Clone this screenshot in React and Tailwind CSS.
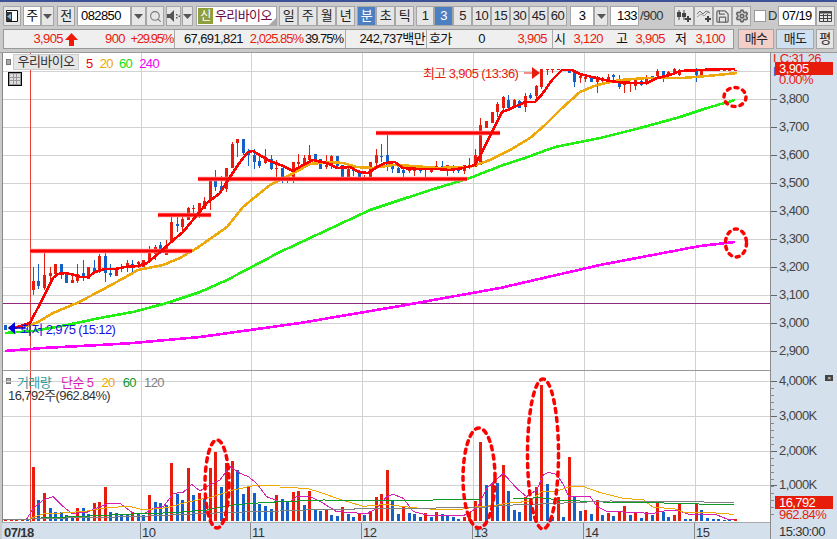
import { Search, Save, Settings } from 'lucide-react'

const RED = '#e61c0c'
const BLUE = '#155fc8'

// bar position for a given index, 133 bars on the chart
const barX = (i) => Math.round(5.33 + i * 5.525)

// candles: [wick top, body top, body bottom, wick bottom, 1 = up]
const candles = [
  [325, 325, 330, 330, 0], [326, 326, 328, 328, 1], [326, 326, 328, 329, 1], [325, 325, 328, 329, 1], [323, 323, 327, 329, 1],
  [267, 281, 290, 295, 1], [264, 281, 286, 289, 0], [252, 275, 288, 290, 1], [267, 273, 276, 281, 1], [264, 264, 274, 274, 1],
  [264, 264, 275, 279, 0], [273, 273, 283, 283, 0], [273, 280, 283, 283, 1], [264, 274, 281, 283, 1], [260, 273, 278, 281, 0],
  [267, 267, 279, 279, 1], [260, 268, 271, 274, 0], [254, 256, 270, 273, 1], [253, 256, 273, 282, 0], [264, 273, 275, 277, 0],
  [267, 268, 276, 276, 1], [264, 267, 269, 272, 1], [260, 263, 267, 272, 1], [260, 264, 268, 273, 0], [261, 262, 264, 268, 1],
  [260, 260, 267, 267, 1], [246, 252, 262, 262, 1], [245, 247, 254, 260, 1], [242, 245, 250, 254, 0], [240, 245, 255, 255, 1],
  [216, 222, 243, 243, 1], [217, 224, 226, 232, 0], [217, 219, 227, 232, 1], [207, 208, 220, 220, 1], [205, 208, 209, 219, 1],
  [203, 203, 211, 218, 1], [197, 201, 209, 209, 1], [180, 180, 201, 210, 1], [170, 180, 187, 191, 0], [176, 186, 191, 193, 0],
  [168, 168, 189, 192, 1], [142, 144, 168, 168, 1], [139, 139, 143, 157, 1], [139, 139, 153, 155, 0], [149, 153, 155, 166, 0],
  [149, 155, 162, 169, 0], [155, 161, 166, 168, 0], [149, 157, 163, 164, 1], [155, 159, 169, 170, 0], [160, 168, 169, 178, 1],
  [168, 168, 177, 183, 0], [175, 176, 177, 183, 0], [162, 162, 178, 183, 1], [154, 162, 164, 167, 1], [155, 158, 164, 168, 1],
  [145, 155, 160, 160, 1], [154, 154, 162, 162, 0], [159, 159, 169, 169, 0], [155, 165, 167, 169, 1], [155, 156, 165, 169, 1],
  [156, 156, 166, 167, 0], [165, 165, 177, 179, 0], [167, 169, 177, 179, 1], [166, 169, 171, 176, 0], [170, 171, 177, 181, 0],
  [175, 177, 179, 179, 1], [162, 162, 179, 179, 1], [149, 155, 163, 167, 1], [144, 156, 157, 162, 0], [135, 155, 165, 171, 0],
  [165, 165, 169, 173, 0], [166, 168, 173, 173, 0], [168, 170, 173, 177, 0], [167, 169, 171, 173, 1], [165, 167, 171, 176, 1],
  [166, 168, 171, 173, 0], [168, 169, 170, 177, 0], [166, 168, 172, 173, 1], [161, 166, 169, 170, 1], [161, 166, 169, 170, 0],
  [165, 165, 170, 176, 1], [165, 166, 169, 173, 0], [168, 169, 171, 173, 0], [165, 165, 171, 174, 1], [158, 165, 168, 169, 0],
  [149, 155, 167, 167, 1], [118, 125, 165, 165, 1], [121, 121, 128, 128, 1], [112, 112, 123, 123, 1], [102, 104, 112, 117, 1],
  [96, 97, 108, 110, 1], [95, 100, 108, 110, 0], [99, 100, 106, 108, 1], [100, 101, 108, 108, 0], [93, 96, 107, 112, 1],
  [93, 95, 98, 99, 0], [85, 86, 96, 100, 1], [69, 69, 87, 89, 1], [69, 69, 70, 75, 1], [69, 69, 70, 73, 1],
  [69, 69, 70, 70, 1], [69, 69, 70, 70, 1], [69, 69, 73, 73, 0], [70, 71, 82, 87, 0], [74, 76, 78, 83, 1],
  [74, 77, 79, 82, 1], [77, 77, 82, 82, 0], [76, 78, 82, 93, 1], [77, 79, 81, 82, 1], [74, 77, 80, 80, 1],
  [74, 75, 77, 80, 0], [75, 79, 87, 89, 0], [83, 84, 85, 93, 1], [82, 83, 84, 92, 1], [80, 80, 86, 90, 1],
  [80, 81, 85, 86, 0], [75, 77, 83, 85, 1], [76, 76, 79, 80, 0], [69, 71, 76, 77, 1], [71, 71, 77, 82, 0],
  [71, 72, 76, 76, 1], [68, 69, 74, 74, 1], [69, 70, 75, 76, 1], [70, 70, 71, 71, 1], [70, 70, 71, 71, 1],
  [68, 69, 75, 82, 0], [69, 69, 75, 78, 1], [70, 70, 71, 71, 1], [70, 70, 71, 71, 1], [70, 70, 71, 71, 1],
  [70, 70, 71, 71, 1], [70, 70, 71, 71, 1], [70, 70, 71, 71, 1],
]

// volume bars: [top y, 1 = up]
const vol = [
  [520, 1], [520, 1], [520, 1], [519, 1], [519, 0],
  ...[[306, 1], [405, 0], [384, 1], [429, 0], [441, 0], [441, 0], [450, 0], [453, 0], [429, 1], [429, 0], [447, 0], [414, 1], [411, 1], [366, 1], [441, 0], [444, 0], [447, 0], [450, 0], [441, 1], [447, 0], [450, 0], [390, 1], [411, 0], [414, 0], [420, 0], [294, 1], [387, 0], [405, 0], [309, 1], [390, 0], [384, 1], [399, 0], [309, 1], [261, 1], [366, 0], [294, 1], [288, 1], [315, 0], [387, 0], [366, 1], [384, 0], [417, 0], [423, 0], [432, 0], [390, 1],
    [402, 0], [411, 0], [381, 1], [378, 1], [420, 0], [378, 1], [432, 0], [438, 0], [432, 1], [450, 0], [453, 0], [426, 1], [447, 0], [456, 0], [447, 1], [450, 0], [438, 1], [396, 1], [387, 1], [315, 1], [408, 0], [447, 0], [426, 1], [444, 0], [447, 0], [456, 0], [444, 1], [456, 0], [441, 1], [447, 0], [450, 0], [456, 0], [462, 0], [456, 1], [441, 1], [408, 1], [231, 1], [360, 0], [354, 1], [354, 0], [300, 1], [378, 0], [435, 0], [441, 0], [396, 1], [411, 0], [366, 1], [60, 1], [357, 0], [456, 0], [396, 1],
    [456, 0], [276, 1], [396, 0], [438, 0], [435, 1], [447, 0], [405, 1], [450, 0], [444, 1], [453, 0], [438, 1], [423, 1], [450, 0], [441, 1], [459, 0], [441, 1], [450, 0], [411, 1], [441, 0], [456, 0], [450, 1], [414, 1], [462, 0], [462, 0], [414, 1], [435, 0], [459, 0], [462, 0], [462, 0], [465, 0], [462, 0], [462, 1]].map(([y, c]) => [365 + y / 3, c]),
]

const ma5 = [[14, 328], [30, 323], [42, 300], [47, 290], [53, 278], [58, 274], [65, 273], [75, 275], [80, 277], [88, 277], [95, 272], [105, 269], [115, 269], [125, 267], [138, 266], [147, 263], [158, 254], [170, 243], [183, 232], [197, 215], [207, 203], [220, 193], [230, 177], [240, 162], [248, 152], [253, 151], [263, 157], [270, 161], [283, 166], [293, 171], [303, 165], [313, 160], [327, 163], [337, 168], [350, 167], [359, 172], [368, 173], [377, 167], [385, 163], [395, 162], [403, 168], [417, 169], [437, 169], [450, 170], [463, 168], [475, 165], [483, 150], [493, 130], [502, 112], [510, 109], [525, 102], [535, 102], [543, 93], [552, 80], [562, 70], [572, 70], [580, 74], [592, 77], [605, 80], [617, 82], [633, 83], [647, 83], [657, 78], [670, 75], [680, 71], [700, 70], [725, 69], [735, 69]]
const ma20 = [[8, 328], [30, 325], [38, 322], [53, 313], [77, 303], [102, 290], [122, 279], [138, 270], [163, 265], [180, 258], [197, 248], [227, 227], [243, 207], [260, 193], [270, 185], [290, 175], [310, 164], [330, 162], [343, 163], [357, 167], [373, 168], [393, 165], [413, 166], [437, 168], [470, 167], [490, 160], [510, 150], [530, 138], [545, 125], [560, 110], [580, 92], [597, 85], [620, 80], [647, 78], [683, 78], [707, 76], [737, 73]]
const ma60 = [[5, 333], [33, 331], [67, 325], [100, 318], [133, 312], [167, 303], [200, 292], [227, 280], [280, 252], [325, 231], [370, 210], [403, 199], [437, 188], [470, 178], [503, 165], [525, 158], [555, 147], [600, 138], [640, 128], [680, 117], [707, 108], [735, 100]]
const ma240 = [[5, 351], [43, 348], [100, 345], [133, 343], [200, 337], [300, 323], [400, 306], [500, 288], [600, 265], [700, 246], [735, 242]]

const pts = (list) => list.map(([x, y]) => `${x},${y}`).join(' ')
// volume averages were read off crops, x starts at each crop's left edge
const crop = (ox, list) => pts(list.map(([x, y]) => [ox + x / 3, 365 + y / 3]))

const volLines = [
  { color: '#d81fb4', parts: [
    crop(0, [[80, 462], [100, 430], [130, 405], [160, 395], [190, 425], [215, 445], [260, 442], [300, 425], [330, 414], [360, 415], [400, 445], [430, 447], [460, 430], [490, 425], [520, 385], [550, 382], [575, 358], [600, 378], [625, 362], [660, 345], [690, 305], [720, 325], [745, 335], [770, 355], [800, 395], [840, 410]]),
    crop(280, [[0, 410], [30, 410], [50, 395], [90, 395], [130, 415], [170, 440], [210, 442], [260, 447], [290, 430], [320, 395], [340, 388], [370, 400], [400, 440], [440, 450], [490, 452], [550, 452], [590, 430], [620, 370], [670, 325], [710, 370], [740, 395], [770, 375], [790, 330], [805, 322], [835, 330]]),
    crop(557, [[0, 330], [20, 360], [35, 395], [100, 395], [120, 425], [150, 440], [250, 442], [280, 447], [320, 438], [360, 435], [400, 450], [430, 447], [480, 450], [510, 462], [530, 465]]),
  ] },
  { color: '#f0a800', parts: [
    crop(0, [[90, 460], [130, 447], [200, 443], [260, 438], [320, 428], [390, 424], [430, 435], [500, 428], [560, 412], [640, 395], [700, 375], [770, 360], [840, 362]]),
    crop(280, [[0, 367], [80, 370], [130, 385], [170, 400], [250, 424], [320, 418], [370, 425], [410, 428]]),
    crop(280, [[450, 433], [530, 435], [590, 425], [640, 422], [700, 412], [750, 410], [785, 380], [835, 378]]),
    crop(557, [[0, 378], [40, 365], [80, 365], [130, 383], [200, 400], [260, 405], [290, 428], [350, 430], [380, 442], [450, 442], [530, 448]]),
  ] },
  { color: '#0f9a2a', parts: [
    crop(0, [[100, 460], [270, 453], [400, 447], [520, 443], [620, 435], [700, 420], [760, 415], [840, 410]]),
    crop(280, [[0, 410], [130, 405], [250, 406], [460, 405], [600, 402], [700, 402], [780, 398], [835, 405]]),
    crop(557, [[0, 405], [160, 412], [200, 412], [320, 414], [530, 420]]),
  ] },
  { color: '#808080', parts: [
    crop(0, [[10, 465], [150, 460], [400, 455], [620, 445], [760, 440], [840, 438]]),
    crop(280, [[0, 438], [100, 434], [350, 430], [590, 428], [700, 420], [835, 415]]),
    crop(557, [[0, 415], [160, 408], [530, 412]]),
  ] },
]

const vGrid = [141, 251, 362, 473, 584, 695]
const priceGrid = [71, 99, 127, 155, 183, 211, 239, 267, 295, 323, 351]
const volGrid = [381, 416, 451, 485]

const priceLabels = [
  ['3,800', 99], ['3,700', 127], ['3,600', 155], ['3,500', 183], ['3,400', 211],
  ['3,300', 239], ['3,200', 267], ['3,100', 295], ['3,000', 323], ['2,900', 351],
]
const volLabels = [['4,000K', 381], ['3,000K', 416], ['2,000K', 451], ['1,000K', 485]]
const volTicks = Array.from({ length: 20 }, (_, i) => 381 + i * 7)

const Btn = ({ children, active, className = '' }) => (
  <div className={`flex h-full items-center justify-center border border-[#a6a6a6] ${active ? 'bg-[#4c80c2] text-white' : 'bg-[#e6e6e6] text-[#222]'} ${className}`}>
    {children}
  </div>
)

const Arrow = () => (
  <svg width="9" height="5" viewBox="0 0 9 5"><path d="M0 0h9L4.5 5z" fill="#555" /></svg>
)

function Toolbar() {
  return (
    <div className="mt-[4px] flex h-[20px] pl-[3px] text-[13px]">
      <Btn className="w-[18px]">
        <svg width="14" height="14" viewBox="0 0 14 14">
          <path d="M1.5 1.5h11v11h-11z" fill="#fff" stroke="#111" />
          <path d="M1 3h6v9H1z" fill="#333" />
          <path d="M2 7.5l4-3v6z" fill="#8cb4d8" />
        </svg>
      </Btn>
      <div className="ml-[2px] flex w-[31px] bg-white">
        <div className="flex flex-1 items-center justify-center border border-[#a6a6a6]">주</div>
        <Btn className="w-[13px]"><Arrow /></Btn>
      </div>
      <Btn className="ml-[3px] w-[18px]">전</Btn>
      <div className="ml-[2px] flex h-full w-[54px] items-center border border-[#a6a6a6] bg-white pl-[3px]">082850</div>
      <Btn className="w-[15px]"><Arrow /></Btn>
      <Btn className="w-[18px]"><Search size={13} strokeWidth={2} color="#777" /></Btn>
      <Btn className="ml-[2px] w-[15px]">
        <svg width="13" height="12" viewBox="0 0 13 12">
          <path d="M0 4h3l4-4v12l-4-4H0z" fill="#555" />
          <path d="M9 4h1.500v1.500H9zM9 7h1.500v1.500H9zM11.500 5.500H13V7h-1.500z" fill="#555" />
        </svg>
      </Btn>
      <Btn className="ml-[1px] w-[11px]"><Arrow /></Btn>
      <div className="relative ml-[3px] flex w-[81px] items-center border border-[#a6a6a6] bg-white pl-[1px]">
        <div className="flex h-[16px] w-[15px] items-center justify-center bg-[#8f9f3c] text-[12px] text-white">신</div>
        <div className="ml-[2px] text-[#6b0a44]">우리바이오</div>
        <svg className="absolute bottom-0 right-0" width="7" height="7" viewBox="0 0 7 7"><path d="M7 0v7H0z" fill="#aaa" /></svg>
      </div>
      <div className="ml-[2px] flex">
        {['일', '주', '월', '년'].map((t) => <Btn key={t} className="w-[19px]">{t}</Btn>)}
      </div>
      <div className="ml-[2px] flex">
        <Btn active className="w-[19px]">분</Btn>
        <Btn className="w-[19px]">초</Btn>
        <Btn className="w-[19px]">틱</Btn>
      </div>
      <div className="ml-[2px] flex">
        <Btn className="w-[18px]">1</Btn>
        <Btn active className="w-[19px]">3</Btn>
        {['5', '10', '15', '30', '45', '60'].map((t) => <Btn key={t} className="w-[19px]">{t}</Btn>)}
      </div>
      <div className="ml-[3px] flex w-[38px]">
        <div className="flex flex-1 items-center justify-center border border-[#a6a6a6] bg-white">3</div>
        <Btn className="w-[14px]"><Arrow /></Btn>
      </div>
      <div className="ml-[2px] flex w-[29px] items-center justify-end border border-[#a6a6a6] bg-white pr-[1px]">133</div>
      <div className="flex w-[35px] items-center pl-[1px] text-[#333]">/900</div>
      <Btn className="w-[20px]">
        <svg width="16" height="14" viewBox="0 0 16 14">
          <path d="M3 1v10M8 1v10" stroke="#444" />
          <path d="M1 3h4v5H1zM6 4h4v4H6z" fill="#444" />
          <path d="M12 7v6M9 10h6" stroke="#444" strokeWidth="2" />
        </svg>
      </Btn>
      <Btn className="w-[19px]">
        <svg width="16" height="14" viewBox="0 0 16 14" fill="none">
          <path d="M1 5l3-3 3 3 3-3 4 2" stroke="#777" />
          <path d="M1 8l4-3 3 2 5-5" stroke="#999" />
          <path d="M12 7v6M9 10h6" stroke="#444" strokeWidth="2" />
        </svg>
      </Btn>
      <Btn className="w-[19px]"><Save size={15} strokeWidth={2} color="#666" /></Btn>
      <Btn className="w-[19px]"><Settings size={14} strokeWidth={3} color="#666" /></Btn>
      <div className="ml-[3px] mt-[4px] h-[12px] w-[12px] border border-[#999] bg-white" />
      <div className="flex w-[12px] items-center pl-[2px] text-[#333]">D</div>
      <div className="flex w-[38px] items-center justify-center border border-[#a6a6a6] bg-white">07/19</div>
      <Btn className="w-[19px]">
        <svg width="13" height="12" viewBox="0 0 13 12" fill="none" stroke="#444">
          <path d="M.5 1.500h12v10H.5z" />
          <path d="M.5 2.500h12" strokeWidth="2" />
          <path d="M.5 5.500h12M.5 8.500h12M4.500 4v8M8.500 4v8" />
        </svg>
      </Btn>
    </div>
  )
}

function InfoBar() {
  const r = 'text-right text-[#e8200f]'
  return (
    <div className="mt-[3px] flex h-[20px] pl-[3px] text-[13px]">
      <div className="flex h-full w-[731px] items-center border border-[#999] bg-[#efefef] text-[#111]">
        <div className="flex h-full w-[171px] items-center border-r border-[#aaa]">
          <span className={`${r} w-[59px]`}>3,905</span>
          <svg className="ml-[2px]" width="13" height="13" viewBox="0 0 13 13"><path d="M6.500 0L13 7H9v6H4V7H0z" fill="#f01a08" /></svg>
          <span className={`${r} w-[47px]`}>900</span>
          <span className={`${r} w-[48px] tracking-[-1.300px]`}>+29.95%</span>
        </div>
        <div className="flex h-full w-[171px] items-center border-r border-[#aaa]">
          <span className="w-[68px] text-right">67,691,821</span>
          <span className={`${r} w-[60px] tracking-[-1px]`}>2,025.85%</span>
          <span className="w-[40px] text-right tracking-[-1px]">39.75%</span>
        </div>
        <div className="flex h-full w-[81px] items-center border-r border-[#aaa]">
          <span className="w-[79px] text-right">242,737백만</span>
        </div>
        <div className="flex h-full w-[126px] items-center border-r border-[#aaa]">
          <span className="ml-[2px] w-[26px]">호가</span>
          <span className="w-[30px] text-right">0</span>
          <span className={`${r} w-[62px]`}>3,905</span>
        </div>
        <div className="flex h-full flex-1 items-center">
          <span className="w-[14px] pl-[1px]">시</span>
          <span className={`${r} w-[36px]`}>3,120</span>
          <span className="ml-[13px] w-[14px]">고</span>
          <span className={`${r} w-[35px]`}>3,905</span>
          <span className="ml-[10px] w-[15px]">저</span>
          <span className={`${r} w-[35px]`}>3,100</span>
        </div>
      </div>
      <Btn className="ml-[4px] w-[36px] !bg-[#f3cfc8]">매수</Btn>
      <Btn className="ml-[2px] w-[38px] !bg-[#cfe0f3]">매도</Btn>
      <Btn className="ml-[2px] w-[18px]">평</Btn>
    </div>
  )
}

function PriceChart() {
  return (
    <svg className="absolute inset-0 h-full w-full" viewBox="3 53 767 317">
      <g shapeRendering="crispEdges" stroke="#d2d2d2">
        {priceGrid.map((y) => <line key={y} x1="3" x2="770" y1={y + 0.5} y2={y + 0.5} />)}
        {vGrid.map((x) => <line key={x} x1={x + 0.5} x2={x + 0.5} y1="53" y2="370" />)}
      </g>
      <line x1="30.500" x2="30.500" y1="53" y2="370" stroke="#e8413a" shapeRendering="crispEdges" />
      <line x1="3" x2="770" y1="303.500" y2="303.500" stroke="#8d2a80" shapeRendering="crispEdges" />
      <g shapeRendering="crispEdges">
        {candles.map(([wt, bt, bb, wb, up], i) => {
          const x = barX(i)
          const c = up ? RED : BLUE
          return (
            <g key={i}>
              <line x1={x + 0.5} x2={x + 0.5} y1={wt} y2={wb} stroke={c} />
              <rect x={x - 1} y={bt} width="3" height={Math.max(bb - bt, 1)} fill={c} />
            </g>
          )
        })}
      </g>
      <g fill="none" strokeLinejoin="round">
        <g shapeRendering="crispEdges">
          <polyline points={pts(ma240)} stroke="#ff00ff" strokeWidth="2.600" />
          <polyline points={pts(ma60)} stroke="#22f012" strokeWidth="2.600" />
          <polyline points={pts(ma20)} stroke="#efa80a" strokeWidth="2.600" />
        </g>
        {[[30, 192, 251], [158, 211, 215], [198, 467, 179], [376, 500, 133]].map(([x1, x2, y]) => (
          <g key={y}>
            <line x1={x1} x2={x2} y1={y} y2={y} stroke="#ff8a8a" strokeWidth="4.500" />
            <line x1={x1} x2={x2} y1={y} y2={y} stroke="#ff0000" strokeWidth="3" />
          </g>
        ))}
        <polyline points={pts(ma5)} stroke="#ff0000" strokeWidth="2.600" shapeRendering="crispEdges" />
        <path d="M524 73h8" stroke={RED} />
        <path d="M532 67l8 6-8 6z" fill={RED} />
        <path d="M13 328h12" stroke="#0000e0" strokeWidth="1.500" />
        <path d="M15 322l-7 6 7 6z" fill="#0000e0" />
        <ellipse cx="735" cy="97" rx="11" ry="9.500" stroke="#f00" strokeWidth="3.500" strokeLinecap="round" strokeDasharray="3 5" />
        <ellipse cx="736" cy="243" rx="10.500" ry="14" stroke="#f00" strokeWidth="3.500" strokeLinecap="round" strokeDasharray="3 5" />
      </g>
    </svg>
  )
}

function VolumeChart() {
  return (
    <svg className="absolute inset-0 z-10 h-full w-full overflow-visible" viewBox="3 371 767 151">
      <g shapeRendering="crispEdges" stroke="#d2d2d2">
        {volGrid.map((y) => <line key={y} x1="3" x2="770" y1={y + 0.5} y2={y + 0.5} />)}
        {vGrid.map((x) => <line key={x} x1={x + 0.5} x2={x + 0.5} y1="371" y2="522" />)}
      </g>
      <line x1="30.500" x2="30.500" y1="371" y2="522" stroke="#e8413a" shapeRendering="crispEdges" />
      <g shapeRendering="crispEdges">
        {vol.map(([y, up], i) => (
          <rect key={i} x={barX(i) - 1} y={Math.round(y)} width="3" height={521 - Math.round(y)} fill={up ? RED : BLUE} />
        ))}
      </g>
      <g fill="none">
        <g shapeRendering="crispEdges">
          {volLines.map((l) => l.parts.map((p, i) => <polyline key={l.color + i} points={p} stroke={l.color} />))}
        </g>
        <ellipse cx="217" cy="484" rx="12" ry="44" stroke="#f00" strokeWidth="3.500" strokeLinecap="round" strokeDasharray="4 5" />
        <ellipse cx="479" cy="478" rx="16" ry="50" stroke="#f00" strokeWidth="3.500" strokeLinecap="round" strokeDasharray="4 5" />
        <ellipse cx="543" cy="454" rx="15.500" ry="75" stroke="#f00" strokeWidth="3.500" strokeLinecap="round" strokeDasharray="4 5" />
      </g>
    </svg>
  )
}

function RightAxis() {
  const label = (text, y) => (
    <div key={text} className="absolute left-0 flex items-center text-[#444]" style={{ top: y - 53 - 8 }}>
      <span className="h-px w-[6px] bg-[#666]" />
      <span className="ml-[2px] h-[16px] text-[13px] leading-[16px]">{text}</span>
    </div>
  )
  return (
    <div className="relative w-[67px] border-l border-[#8a8a8a] bg-[#d5e0ed]">
      <div className="absolute left-[2px] top-[-1px] h-[10px] overflow-hidden text-[13px] leading-[14px] text-[#e8200f]">LC:31.26</div>
      <div className="absolute left-[2px] top-[12px] text-[13px] leading-[14px] text-[#1a50c0]">H</div>
      <div className="absolute left-[4px] top-[9px] h-[13px] w-[58px] bg-[#e81c0a] pl-[4px] text-[13px] leading-[13px] text-white">3,905</div>
      <div className="absolute left-[8px] top-[20px] text-[13px] leading-[14px] text-[#e8200f]">0.00%</div>
      {priceLabels.map(([t, y]) => label(t, y))}
      {volTicks.map((y) => (
        <span key={y} className="absolute left-0 h-px w-[3px] bg-[#888]" style={{ top: y - 53 }} />
      ))}
      {volLabels.map(([t, y]) => label(t, y))}
      <div className="absolute left-[54px] top-[322px] flex h-[6px] w-[8px] items-center justify-center bg-[#444] text-[6px] leading-none text-white">×</div>
      <div className="absolute left-[4px] top-[443px] h-[13px] w-[58px] bg-[#e81c0a] pl-[4px] text-[13px] leading-[13px] text-white">16,792</div>
      <div className="absolute left-[8px] top-[455px] text-[13px] leading-[14px] text-[#e8200f]">962.84%</div>
    </div>
  )
}

export default function App() {
  return (
    <div className="flex h-[539px] w-[837px] flex-col overflow-hidden border-t-2 border-[#3b5296] bg-[#cacaca] font-[family-name:'Liberation_Sans','Noto_Sans_CJK_KR',sans-serif] tracking-[-0.6px]">
      <Toolbar />
      <InfoBar />

      <div className="mt-[3px] flex flex-1 flex-col border-t border-[#999] pl-[2px]">
        <div className="flex h-[469px]">
          <div className="flex w-[768px] flex-col border-l border-[#888] bg-white">
            {/* price pane */}
            <div className="relative h-[318px] border-b border-[#999]">
              <PriceChart />
              <div className="absolute left-[3px] top-[6px] h-[6px] w-[5px] border border-[#777] bg-[#aaa]" />
              <div className="absolute left-[10px] top-[1px] flex h-[16px] w-[66px] items-center justify-center border border-[#ccc] bg-[#e6e6e6] text-[13px] text-[#333]">우리바이오</div>
              <div className="absolute left-[83px] top-[1px] flex text-[13px]">
                <span className="text-[#f00000]">5</span>
                <span className="ml-[7px] text-[#f0a800]">20</span>
                <span className="ml-[6px] text-[#10e010]">60</span>
                <span className="ml-[7px] text-[#f000f0]">240</span>
              </div>
              <div className="absolute left-[5px] top-[19px] grid h-[14px] w-[14px] grid-cols-3 gap-px border border-black bg-[#999] p-px">
                {Array.from({ length: 9 }, (_, i) => <span key={i} className="bg-[#ddd]" />)}
              </div>
              <div className="absolute left-[420px] top-[11px] text-[13px] text-[#e8200f]">최고 3,905 (13:36)</div>
              <div className="absolute left-[17px] top-[267px] text-[13px] text-[#1414e0]">최저 2,975 (15:12)</div>
            </div>
            {/* volume pane */}
            <div className="relative flex-1">
              <VolumeChart />
              <div className="absolute left-[3px] top-[7px] h-[6px] w-[5px] border border-[#777] bg-[#aaa]" />
              <div className="absolute left-[14px] top-[2px] z-20 flex text-[13px]">
                <span className="text-[#2f9a9a]">거래량</span>
                <span className="ml-[10px] text-[#d81fb4]">단순 5</span>
                <span className="ml-[8px] text-[#f0a800]">20</span>
                <span className="ml-[8px] text-[#0f9a2a]">60</span>
                <span className="ml-[8px] text-[#808080]">120</span>
              </div>
              <div className="absolute left-[5px] top-[15px] z-20 text-[13px] text-[#333]">16,792주(962.84%)</div>
            </div>
          </div>
          <RightAxis />
        </div>

        <div className="flex flex-1 bg-[#d5e0ed] text-[13px] text-[#333]">
          <div className="relative w-[768px] border-t border-[#aaa]">
            <span className="absolute left-[2px] top-0 font-bold">07/18</span>
            {[['10', 141], ['11', 251], ['12', 362], ['13', 473], ['14', 584], ['15', 695]].map(([t, x]) => (
              <div key={t} className="absolute top-0 h-full border-l border-[#888] pl-[1px]" style={{ left: x - 3 }}>{t}</div>
            ))}
          </div>
          <div className="w-[67px] border-l border-[#8a8a8a] pl-[8px]">15:30:00</div>
        </div>
      </div>
    </div>
  )
}
